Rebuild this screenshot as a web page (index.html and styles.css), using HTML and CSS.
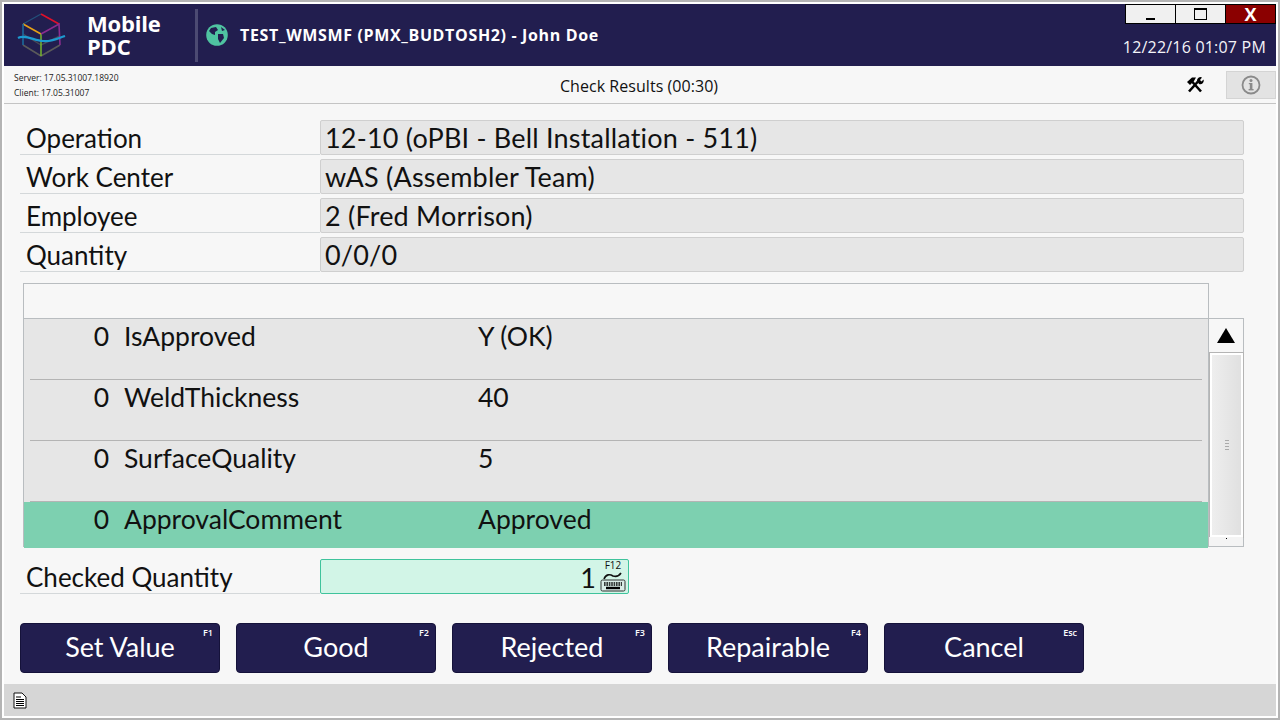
FILE: index.html
```html
<!DOCTYPE html>
<html lang="en">
<head>
  <meta charset="UTF-8">
  <title>Mobile PDC</title>
  <link rel="stylesheet" href="styles.css">
</head>
<body>
<div class="window">
  <header class="topbar">
    <div class="brand">
      <svg class="logo" width="50" height="46" viewBox="0 0 50 46" fill="none" stroke-width="1.4">
        <path d="M6 33 L24 44 L43 33" stroke="#5a5a5a" stroke-width="1.6" />
        <path d="M6 22 L24 33 L43 24" stroke="#4a4a55" />
        <path d="M6 12 L24 2" stroke="#23507a" />
        <path d="M24 2 L42 12" stroke="#e0102a" stroke-width="1.6" />
        <path d="M6 12 L24 22" stroke="#e6a117" stroke-width="1.6" />
        <path d="M24 22 L24 44" stroke="#7cc02c" />
        <path d="M24 22 L42 12 L43 33" stroke="#8a2d8f" stroke-width="1.6" />
        <path d="M6 12 L6 33" stroke="#1b6a9c" stroke-width="1.6" />
        <path d="M1 26 C8 22 18 29 26 29 C34 30 39 27 48 24" stroke="#1c9ad0" stroke-width="2.2" />
      </svg>
      <div class="brand-name">Mobile<br>PDC</div>
    </div>
    <svg class="globe" width="22" height="22" viewBox="0 0 22 22">
      <circle cx="11" cy="11" r="10.8" fill="#4fc3a1" />
      <path d="M5 4 L10 3 L12 6 L9 8 L9 11 L6 10 L3 7 Z M12 10 L17 10 L18 14 L14 19 L12 15 Z M15 3 L19 6 L16 7 Z" fill="#221e4f" />
    </svg>
    <div class="session">TEST_WMSMF (PMX_BUDTOSH2) - John Doe</div>
    <div class="win-side">
      <div class="win-buttons">
        <div class="win-btn"><span class="min-mark"></span></div>
        <div class="win-btn"><span class="max-mark"></span></div>
        <div class="win-btn close">X</div>
      </div>
      <div class="clock">12/22/16 01:07 PM</div>
    </div>
  </header>

  <div class="subbar">
    <div class="versions">
      <div>Server: 17.05.31007.18920</div>
      <div>Client: 17.05.31007</div>
    </div>
    <div class="screen-title">Check Results (00:30)</div>
    <svg class="tools" width="18" height="18" viewBox="0 0 18 18">
      <path d="M3 15.5 L12 5.5 M15 15.5 L6 5.5" stroke="#000" stroke-width="2.6" />
      <path d="M1 6 L6 1.5 L10 1.5 L8 5 L4 9 Z" fill="#000" />
      <path d="M11 5 A3.5 3.5 0 0 1 16 1.5 L14 4 L15.5 5.5 L17.5 3.5 A3.5 3.5 0 0 1 13 8 Z" fill="#000" />
    </svg>
    <div class="info-btn">
      <svg width="20" height="20" viewBox="0 0 20 20">
        <circle cx="10" cy="10" r="8.5" fill="none" stroke="#8a8a8a" stroke-width="1.8" />
        <rect x="8.8" y="8" width="2.6" height="7" fill="#8a8a8a" />
        <rect x="7.6" y="14" width="5" height="1.4" fill="#8a8a8a" />
        <rect x="7.8" y="8" width="2" height="1.2" fill="#8a8a8a" />
        <circle cx="10" cy="5.4" r="1.5" fill="#8a8a8a" />
      </svg>
    </div>
  </div>

  <main class="content">
    <div class="fields">
      <div class="field-row">
        <div class="field-label">Operation</div>
        <div class="field-value">12-10 (oPBI - Bell Installation - 511)</div>
      </div>
      <div class="field-row">
        <div class="field-label">Work Center</div>
        <div class="field-value">wAS (Assembler Team)</div>
      </div>
      <div class="field-row">
        <div class="field-label">Employee</div>
        <div class="field-value">2 (Fred Morrison)</div>
      </div>
      <div class="field-row">
        <div class="field-label">Quantity</div>
        <div class="field-value">0/0/0</div>
      </div>
    </div>

    <div class="results">
      <div class="results-head"></div>
      <div class="results-body">
        <div class="results-list">
          <div class="result-row">
            <div class="result-num">0</div>
            <div class="result-name">IsApproved</div>
            <div class="result-val">Y (OK)</div>
          </div>
          <div class="result-row">
            <div class="result-num">0</div>
            <div class="result-name">WeldThickness</div>
            <div class="result-val">40</div>
          </div>
          <div class="result-row">
            <div class="result-num">0</div>
            <div class="result-name">SurfaceQuality</div>
            <div class="result-val">5</div>
          </div>
          <div class="result-row selected">
            <div class="result-num">0</div>
            <div class="result-name">ApprovalComment</div>
            <div class="result-val">Approved</div>
          </div>
        </div>
        <div class="scrollbar">
          <div class="scroll-up"><span class="arrow"></span></div>
          <div class="scroll-thumb"><span class="grip"></span></div>
          <div class="scroll-down"><span class="dot"></span></div>
        </div>
      </div>
    </div>

    <div class="field-row checked">
      <div class="field-label">Checked Quantity</div>
      <div class="qty-input">
        <span class="qty-num">1</span>
        <div class="keyboard">
          <span class="key-hint">F12</span>
          <svg width="26" height="20" viewBox="0 0 26 20" fill="none">
            <path d="M4 7 C6 2 10 2 13 4 C16 5 19 4 21 1" stroke="#111" stroke-width="1.6" />
            <rect x="1" y="8" width="24" height="11" rx="1.5" fill="#d9ece6" stroke="#333" />
            <path d="M4 11 H22 M4 13 H22" stroke="#000" stroke-width="1.6" stroke-dasharray="1.6 .8" />
            <path d="M6 16 H20" stroke="#000" stroke-width="2.4" />
          </svg>
        </div>
      </div>
    </div>

    <div class="actions">
      <button class="action">Set Value<span class="hotkey">F1</span></button>
      <button class="action">Good<span class="hotkey">F2</span></button>
      <button class="action">Rejected<span class="hotkey">F3</span></button>
      <button class="action">Repairable<span class="hotkey">F4</span></button>
      <button class="action">Cancel<span class="hotkey">Esc</span></button>
    </div>
  </main>

  <footer class="statusbar">
    <svg width="14" height="17" viewBox="0 0 14 17">
      <path d="M1 1 H9 L13 5 V16 H1 Z" fill="#fff" stroke="#111" />
      <path d="M3 5 H8 M3 7.5 H11 M3 9.5 H11 M3 11.5 H11 M3 13.5 H11" stroke="#000" stroke-width="1.2" />
    </svg>
  </footer>
</div>
</body>
</html>
```

FILE: styles.css
```css
html, body {
  margin: 0;
  height: 100%;
}
body {
  font-family: Lato, "Open Sans", sans-serif;
  background: #fff;
  color: #000;
  overflow: hidden;
}
.window {
  box-sizing: border-box;
  width: 1280px;
  height: 720px;
  border: 2px solid #b4b4b4;
  padding: 2px;
  background: #fff;
  display: flex;
  flex-direction: column;
}

/* header */
.topbar {
  height: 62px;
  background: #221e4f;
  color: #fff;
  display: flex;
  align-items: center;
  flex-shrink: 0;
}
.brand {
  width: 191px;
  height: 53px;
  display: flex;
  align-items: center;
  border-right: 3px solid #4c4a72;
}
.logo {
  margin-left: 13px;
}
.brand-name {
  margin-left: 20px;
  font-family: "Open Sans", sans-serif;
  font-size: 22px;
  line-height: 23px;
  font-weight: 700;
  letter-spacing: -0.2px;
}
.globe {
  margin-left: 8px;
}
.session {
  margin-left: 12px;
  font-family: "Open Sans", sans-serif;
  font-size: 16px;
  font-weight: 700;
  letter-spacing: 0.65px;
}
.win-side {
  margin-left: auto;
  align-self: stretch;
  display: flex;
  flex-direction: column;
  align-items: flex-end;
}
.win-buttons {
  display: flex;
  box-sizing: border-box;
  height: 20px;
  border: 1px solid #000;
  border-right: 0;
}
.win-btn {
  width: 49px;
  background: #f0f0f0;
  border-right: 1px solid #000;
  display: flex;
  align-items: center;
  justify-content: center;
}
.win-btn.close {
  background: #8b0000;
  color: #fff;
  font-family: "Open Sans", sans-serif;
  font-weight: 700;
  font-size: 18px;
}
.min-mark {
  width: 9px;
  height: 2px;
  background: #000;
  margin-top: 10px;
}
.max-mark {
  box-sizing: border-box;
  width: 13px;
  height: 12px;
  border: 1px solid #000;
  border-top-width: 2px;
}
.clock {
  margin-top: 12px;
  margin-right: 10px;
  font-family: "Open Sans", sans-serif;
  font-size: 16px;
  letter-spacing: 0.2px;
  color: #f4f4f8;
}

/* second bar */
.subbar {
  height: 37px;
  background: #f7f7f7;
  border-bottom: 1px solid #c4c4c4;
  display: flex;
  align-items: center;
  position: relative;
  flex-shrink: 0;
}
.versions {
  margin-left: 10px;
  font-family: "Open Sans", sans-serif;
  font-size: 8.5px;
  line-height: 15px;
  color: #222;
}
.screen-title {
  position: absolute;
  left: 0;
  right: 2px;
  top: 8px;
  text-align: center;
  font-family: "Open Sans", sans-serif;
  font-size: 16px;
  line-height: 24px;
  letter-spacing: 0.05px;
  color: #111;
}
.tools {
  margin-left: auto;
  position: relative;
}
.info-btn {
  width: 50px;
  height: 28px;
  margin-left: 22px;
  background: #e3e3e3;
  border: 1px solid #d4d4d4;
  box-sizing: border-box;
  display: flex;
  align-items: center;
  justify-content: center;
  position: relative;
}

/* form */
.content {
  flex: 1;
  background: #f7f7f7;
  padding: 16px 32px 0 16px;
  display: flex;
  flex-direction: column;
  min-height: 0;
}
.fields {
  display: flex;
  flex-direction: column;
  gap: 4px;
}
.field-row {
  display: flex;
  height: 35px;
}
.field-label {
  box-sizing: border-box;
  width: 300px;
  padding: 1px 0 0 6px;
  font-size: 26px;
  line-height: 34px;
  color: #111;
  border-bottom: 1px solid #d4d8da;
}
.field-value {
  box-sizing: border-box;
  flex: 1;
  background: #e6e6e6;
  border: 1px solid #cfcfcf;
  border-radius: 2px;
  padding-left: 4px;
  font-size: 27px;
  line-height: 34px;
  letter-spacing: 0.2px;
  color: #111;
}

/* results table */
.results {
  margin-top: 11px;
  margin-left: 3px;
}
.results-head {
  box-sizing: border-box;
  width: 1186px;
  height: 35px;
  border: 1px solid #b9bdc0;
  border-bottom: 0;
  background: #f7f7f7;
}
.results-body {
  display: flex;
  height: 229px;
}
.results-list {
  box-sizing: border-box;
  width: 1186px;
  background: #e6e6e6;
  border: 1px solid #b9bdc0;
  display: flex;
  flex-direction: column;
}
.result-row {
  height: 61px;
  display: flex;
  flex-shrink: 0;
  box-sizing: border-box;
  margin-right: 6px;
  margin-left: 6px;
  font-size: 26.5px;
  line-height: 34px;
  color: #111;
  border-bottom: 1px solid #b4b4b4;
}
.result-row.selected {
  background: #7dd0b0;
  border-bottom: 0;
  margin: 0;
  padding: 0 6px;
  height: 46px;
}
.result-num {
  width: 79px;
  text-align: right;
}
.result-name {
  margin-left: 15px;
  width: 354px;
}

/* scrollbar */
.scrollbar {
  box-sizing: border-box;
  width: 35px;
  border: 1px solid #b9bdc0;
  border-left: 0;
  display: flex;
  flex-direction: column;
  background: #f4f4f4;
}
.scroll-up {
  height: 33px;
  background: #f7f7f7;
  display: flex;
  align-items: center;
  justify-content: center;
  flex-shrink: 0;
}
.arrow {
  width: 0;
  height: 0;
  border-left: 9px solid transparent;
  border-right: 9px solid transparent;
  border-bottom: 15px solid #000;
}
.scroll-thumb {
  flex: 1;
  box-sizing: border-box;
  margin: 1px 0 0 1px;
  border: 2px solid #fff;
  outline: 1px solid #b4b4b4;
  background: linear-gradient(to right, #eee, #e0e0e0);
  display: flex;
  align-items: center;
  justify-content: center;
}
.grip {
  width: 4px;
  height: 10px;
  background: repeating-linear-gradient(to bottom, #aaa 0 1px, transparent 1px 3px);
}
.scroll-down {
  height: 9px;
  background: #f4f4f4;
  display: flex;
  justify-content: center;
  flex-shrink: 0;
}
.dot {
  width: 1px;
  height: 1px;
  margin-top: 1px;
  background: #000;
}

/* checked quantity */
.checked {
  margin-top: 12px;
}
.qty-input {
  box-sizing: border-box;
  width: 309px;
  background: #d2f5e7;
  border: 1px solid #3fc39c;
  border-radius: 2px;
  display: flex;
  justify-content: flex-end;
  position: relative;
}
.qty-num {
  font-size: 27px;
  line-height: 36px;
  margin-right: 32px;
  color: #111;
}
.keyboard {
  position: absolute;
  right: 2px;
  top: 0;
  display: flex;
  flex-direction: column;
  align-items: center;
}
.key-hint {
  font-family: "Open Sans", sans-serif;
  font-size: 10px;
  line-height: 11px;
  color: #111;
}
.keyboard svg {
  margin-top: 1px;
}

/* buttons */
.actions {
  display: flex;
  gap: 16px;
  margin-top: 29px;
}
.action {
  position: relative;
  width: 200px;
  height: 50px;
  padding: 0 0 3px;
  background: #221e4f;
  color: #fff;
  border: 1px solid #15123a;
  border-radius: 4px;
  font-family: inherit;
  font-size: 27px;
}
.hotkey {
  position: absolute;
  top: 2px;
  right: 6px;
  font-family: "Open Sans", sans-serif;
  font-size: 9px;
  font-weight: 600;
}

/* bottom */
.statusbar {
  height: 32px;
  background: #d6d6d6;
  flex-shrink: 0;
  display: flex;
  align-items: center;
  padding-left: 9px;
}
```
